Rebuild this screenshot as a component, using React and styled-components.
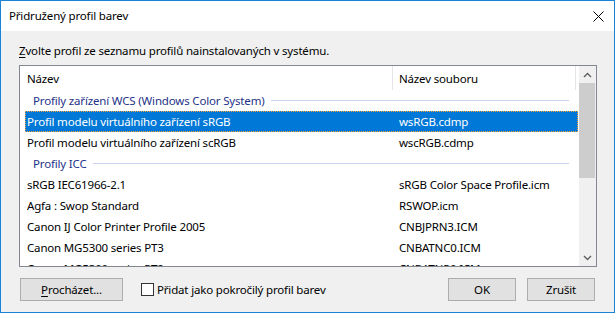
import React from "react";
import styled, { createGlobalStyle } from "styled-components";

const GlobalStyle = createGlobalStyle`
  body {
    margin: 0;
    background: #ffffff;
  }
`;

const rows = [
  { type: "group", name: "Profily zařízení WCS (Windows Color System)" },
  { name: "Profil modelu virtuálního zařízení sRGB", file: "wsRGB.cdmp", selected: true },
  { name: "Profil modelu virtuálního zařízení scRGB", file: "wscRGB.cdmp" },
  { type: "group", name: "Profily ICC" },
  { name: "sRGB IEC61966-2.1", file: "sRGB Color Space Profile.icm" },
  { name: "Agfa : Swop Standard", file: "RSWOP.icm" },
  { name: "Canon IJ Color Printer Profile 2005", file: "CNBJPRN3.ICM" },
  { name: "Canon MG5300 series PT3", file: "CNBATNC0.ICM" },
  { name: "Canon MG5300 series PT2", file: "CNBATNP0.ICM" },
];

const App = () => {
  return (
    <>
      <GlobalStyle />
      <Window>
        <TitleBar>
          <Title>Přidružený profil barev</Title>
          <CloseIcon width="11" height="11" viewBox="0 0 11 11">
            <path d="M0.5 0.5 L10.5 10.5 M10.5 0.5 L0.5 10.5" stroke="#000" strokeWidth="1" fill="none" />
          </CloseIcon>
        </TitleBar>

        <Body>
          <Label>
            <u>Z</u>volte profil ze seznamu profilů nainstalovaných v systému.
          </Label>

          <ListBox>
            <ListArea>
              <Header>
                <HeaderCell $first>Název</HeaderCell>
                <HeaderCell>Název souboru</HeaderCell>
              </Header>
              {rows.map((r, i) =>
                r.type === "group" ? (
                  <GroupRow key={i}>
                    <span>{r.name}</span>
                    <GroupLine />
                  </GroupRow>
                ) : (
                  <Row key={i} $selected={r.selected}>
                    <span>{r.name}</span>
                    <span>{r.file}</span>
                  </Row>
                )
              )}
            </ListArea>
            <ScrollBar>
              <ArrowButton>
                <svg width="9" height="6" viewBox="0 0 9 6">
                  <path d="M1 5 L4.5 1.5 L8 5" stroke="#606060" strokeWidth="1.4" fill="none" />
                </svg>
              </ArrowButton>
              <Thumb />
              <Track />
              <ArrowButton>
                <svg width="9" height="6" viewBox="0 0 9 6">
                  <path d="M1 1 L4.5 4.5 L8 1" stroke="#606060" strokeWidth="1.4" fill="none" />
                </svg>
              </ArrowButton>
            </ScrollBar>
          </ListBox>

          <Footer>
            <Button $width="103px">
              <u>P</u>rocházet...
            </Button>
            <CheckLabel>
              <CheckBox />
              Přidat jako pokročilý profil barev
            </CheckLabel>
            <Spacer />
            <Button $width="68px">OK</Button>
            <Button $width="68px">Zrušit</Button>
          </Footer>
        </Body>
      </Window>
    </>
  );
};

export default App;

const Window = styled.div`
  width: 615px;
  height: 313px;
  box-sizing: border-box;
  border: 1px solid #1883d7;
  background: #f0f0f0;
  display: flex;
  flex-direction: column;
  font-family: "Noto Sans", "Open Sans", sans-serif;
  font-size: 11.5px;
  letter-spacing: -0.17px;
  color: #000;
`;

const TitleBar = styled.div`
  height: 30px;
  flex-shrink: 0;
  background: #ffffff;
  display: flex;
  align-items: center;
  justify-content: space-between;
  padding: 0 10px 0 8px;
`;

const Title = styled.div`
  line-height: 16px;
`;

const CloseIcon = styled.svg`
  display: block;
`;

const Body = styled.div`
  flex: 1;
  display: flex;
  flex-direction: column;
  padding: 12px 17px 0 18px;
`;

const Label = styled.div`
  line-height: 16px;
  height: 16px;
  margin-bottom: 6px;
  u {
    text-decoration-thickness: 1px;
    text-underline-offset: 2px;
  }
`;

const ListBox = styled.div`
  height: 202px;
  box-sizing: border-box;
  border: 1px solid #828790;
  background: #ffffff;
  display: flex;
  overflow: hidden;
`;

const ListArea = styled.div`
  flex: 1;
  overflow: hidden;
  display: flex;
  flex-direction: column;
`;

const Header = styled.div`
  height: 24px;
  flex-shrink: 0;
  display: grid;
  grid-template-columns: 373px 183px;
`;

const HeaderCell = styled.div`
  display: flex;
  align-items: center;
  border-right: 1px solid #e5e5e5;
  padding-left: ${(p) => (p.$first ? "7px" : "6px")};
`;

const GroupRow = styled.div`
  height: 21px;
  flex-shrink: 0;
  display: flex;
  align-items: center;
  padding: 0 10px 0 13px;
  color: #1e3287;
`;

const GroupLine = styled.div`
  flex: 1;
  height: 1px;
  background: #c9d1ec;
  margin-left: 6px;
`;

const Row = styled.div`
  height: 21px;
  flex-shrink: 0;
  box-sizing: border-box;
  margin: 0 1px 0 5px;
  padding-left: 1px;
  display: grid;
  grid-template-columns: 372px 1fr;
  align-items: center;
  white-space: nowrap;
  border: 1px ${(p) => (p.$selected ? "dotted #f7a23c" : "solid transparent")};
  background: ${(p) => (p.$selected ? "#0078d7" : "transparent")};
  color: ${(p) => (p.$selected ? "#ffffff" : "#000000")};
`;

const ScrollBar = styled.div`
  width: 17px;
  flex-shrink: 0;
  background: #f0f0f0;
  display: flex;
  flex-direction: column;
`;

const ArrowButton = styled.div`
  height: 17px;
  flex-shrink: 0;
  display: flex;
  align-items: center;
  justify-content: center;
`;

const Thumb = styled.div`
  height: 95px;
  margin: 0 1px 0 0;
  background: #cdcdcd;
`;

const Track = styled.div`
  flex: 1;
`;

const Footer = styled.div`
  margin-top: 11px;
  height: 23px;
  display: flex;
  align-items: center;
  padding: 0 2px 0 1px;
`;

const Button = styled.div`
  width: ${(p) => p.$width};
  height: 23px;
  box-sizing: border-box;
  border: 1px solid #adadad;
  background: #e1e1e1;
  display: flex;
  align-items: center;
  justify-content: center;
  & + & {
    margin-left: 11px;
  }
  u {
    text-decoration-thickness: 1px;
    text-underline-offset: 2px;
  }
`;

const CheckLabel = styled.div`
  display: flex;
  align-items: center;
  margin-left: 18px;
  gap: 3px;
`;

const CheckBox = styled.div`
  width: 13px;
  height: 13px;
  box-sizing: border-box;
  border: 1px solid #333333;
  background: #ffffff;
`;

const Spacer = styled.div`
  flex: 1;
`;
